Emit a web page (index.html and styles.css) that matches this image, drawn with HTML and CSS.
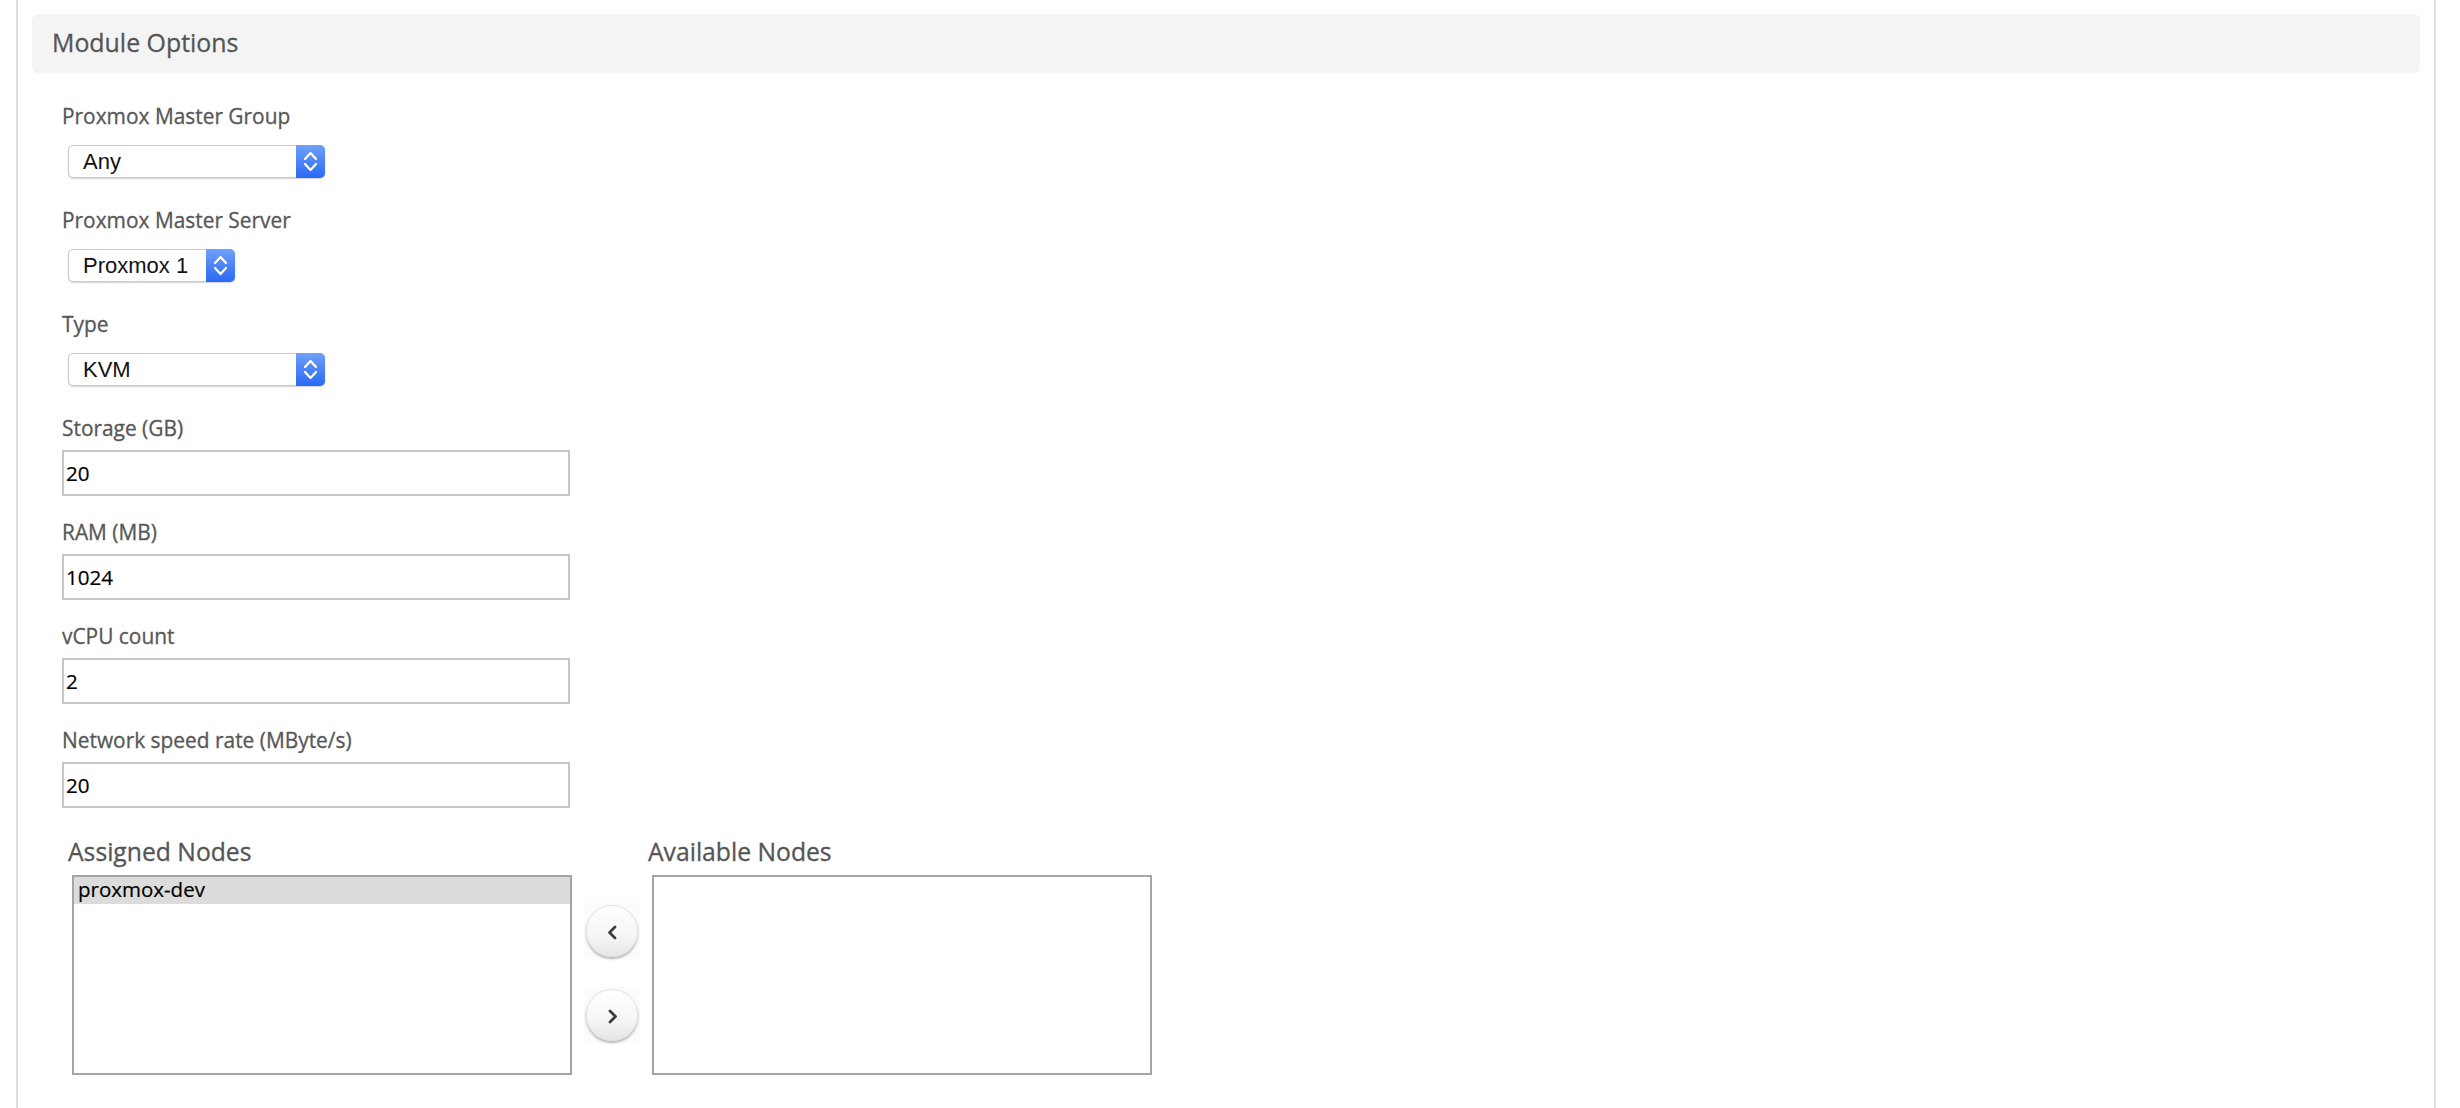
FILE: index.html
```html
<!DOCTYPE html>
<html lang="en">
<head>
<meta charset="utf-8">
<title>Module Options</title>
<link rel="stylesheet" href="styles.css">
</head>
<body>
<div class="frame">
  <div class="panel-head">Module Options</div>
  <div class="form">
    <div class="field">
      <label class="label">Proxmox Master Group</label>
      <div class="control">
        <div class="select select-wide">
          <span class="select-value">Any</span>
          <span class="select-arrow"><svg width="29" height="33" viewBox="0 0 29 33"><polyline points="9,14 14.5,8 20,14" fill="none" stroke="#fff" stroke-width="2.2" stroke-linecap="round" stroke-linejoin="round"/><polyline points="9,19 14.5,25 20,19" fill="none" stroke="#fff" stroke-width="2.2" stroke-linecap="round" stroke-linejoin="round"/></svg></span>
        </div>
      </div>
    </div>
    <div class="field">
      <label class="label">Proxmox Master Server</label>
      <div class="control">
        <div class="select select-narrow">
          <span class="select-value">Proxmox 1</span>
          <span class="select-arrow"><svg width="29" height="33" viewBox="0 0 29 33"><polyline points="9,14 14.5,8 20,14" fill="none" stroke="#fff" stroke-width="2.2" stroke-linecap="round" stroke-linejoin="round"/><polyline points="9,19 14.5,25 20,19" fill="none" stroke="#fff" stroke-width="2.2" stroke-linecap="round" stroke-linejoin="round"/></svg></span>
        </div>
      </div>
    </div>
    <div class="field">
      <label class="label">Type</label>
      <div class="control">
        <div class="select select-wide">
          <span class="select-value">KVM</span>
          <span class="select-arrow"><svg width="29" height="33" viewBox="0 0 29 33"><polyline points="9,14 14.5,8 20,14" fill="none" stroke="#fff" stroke-width="2.2" stroke-linecap="round" stroke-linejoin="round"/><polyline points="9,19 14.5,25 20,19" fill="none" stroke="#fff" stroke-width="2.2" stroke-linecap="round" stroke-linejoin="round"/></svg></span>
        </div>
      </div>
    </div>
    <div class="field">
      <label class="label">Storage (GB)</label>
      <div class="control"><input class="input" type="text" value="20"></div>
    </div>
    <div class="field">
      <label class="label">RAM (MB)</label>
      <div class="control"><input class="input" type="text" value="1024"></div>
    </div>
    <div class="field">
      <label class="label">vCPU count</label>
      <div class="control"><input class="input" type="text" value="2"></div>
    </div>
    <div class="field">
      <label class="label">Network speed rate (MByte/s)</label>
      <div class="control"><input class="input" type="text" value="20"></div>
    </div>

    <div class="nodes">
      <div class="nodes-title title-assigned">Assigned Nodes</div>
      <div class="nodes-title title-available">Available Nodes</div>
      <div class="listbox list-assigned">
        <div class="option selected">proxmox-dev</div>
      </div>
      <div class="movers">
        <div class="mover-wrap">
          <button class="mover" type="button" aria-label="Assign"><svg width="52" height="52" viewBox="0 0 52 52"><polyline points="29,22 23.5,27.5 29,33" fill="none" stroke="#3c3c3c" stroke-width="2.8" stroke-linecap="round" stroke-linejoin="round"/></svg></button>
        </div>
        <div class="mover-wrap">
          <button class="mover" type="button" aria-label="Unassign"><svg width="52" height="52" viewBox="0 0 52 52"><polyline points="24,22 29.5,27.5 24,33" fill="none" stroke="#3c3c3c" stroke-width="2.8" stroke-linecap="round" stroke-linejoin="round"/></svg></button>
        </div>
      </div>
      <div class="listbox list-available"></div>
    </div>
  </div>
</div>
</body>
</html>
```

FILE: styles.css
```css
html, body {
  margin: 0;
  padding: 0;
  background: #ffffff;
}

body {
  font-family: "Open Sans", "Noto Sans", sans-serif;
  height: 1108px;
  overflow: hidden;
}

.frame {
  margin: 0 24px 0 16px;
  border-left: 2px solid #dcdcdc;
  border-right: 2px solid #dcdcdc;
  padding: 14px 14px 0;
  min-height: 1108px;
  box-sizing: border-box;
}

.panel-head {
  height: 59px;
  box-sizing: border-box;
  padding: 0 0 2px 20px;
  line-height: 57px;
  background: #f4f4f4;
  border-radius: 6px;
  font-size: 24.9px;
  color: #555555;
  -webkit-text-stroke: 0.3px #555555;
}

.form {
  padding: 28px 0 0 30px;
}

.field {
  margin-bottom: 21px;
}

.label {
  display: block;
  font-size: 20.9px;
  line-height: 30px;
  color: #575757;
  margin-bottom: 7px;
  -webkit-text-stroke: 0.3px #575757;
}

.control {
  display: flow-root;
  height: 46px;
}

.select {
  margin: 7px 0 0 6px;
  height: 33px;
  box-sizing: border-box;
  display: flex;
  align-items: center;
  background: #ffffff;
  border: 1px solid #cacaca;
  border-radius: 5px;
  box-shadow: 0 1px 1.5px rgba(0, 0, 0, 0.18);
}

.select-wide {
  width: 257px;
}

.select-narrow {
  width: 167px;
}

.select-value {
  flex: 1;
  padding-left: 14px;
  font-family: "Liberation Sans", Arial, sans-serif;
  font-size: 22px;
  color: #111111;
  white-space: nowrap;
}

.select-arrow {
  align-self: stretch;
  width: 29px;
  margin: -1px -1px -1px 0;
  display: flex;
  align-items: center;
  justify-content: center;
  background: linear-gradient(#6fa0fa, #2a69f5);
  border-radius: 0 5px 5px 0;
}

.select-arrow svg {
  display: block;
}

.input {
  display: block;
  width: 508px;
  height: 46px;
  box-sizing: border-box;
  margin: 0;
  border: 2px solid #c6c6c6;
  border-radius: 0;
  padding: 0 2px;
  font-family: "Open Sans", "Noto Sans", sans-serif;
  font-size: 20.6px;
  color: #000000;
  background: #ffffff;
  outline: none;
  -webkit-text-stroke: 0.2px #000000;
}

.nodes {
  display: grid;
  grid-template-columns: 504px 76px 504px;
  padding: 6px 0 0 6px;
}

.nodes-title {
  font-size: 24.7px;
  line-height: 34px;
  color: #555555;
  margin-bottom: 6px;
  grid-row: 1;
  -webkit-text-stroke: 0.3px #555555;
}

.title-assigned {
  grid-column: 1;
}

.title-available {
  grid-column: 3;
}

.listbox {
  grid-row: 2;
  margin-left: 4px;
  width: 500px;
  height: 200px;
  box-sizing: border-box;
  border: 2px solid #a5a5a5;
  background: #ffffff;
}

.list-assigned {
  grid-column: 1;
}

.list-available {
  grid-column: 3;
}

.option {
  height: 27px;
  box-sizing: border-box;
  padding: 0 0 3px 4px;
  line-height: 24px;
  font-size: 20.5px;
  color: #000000;
  -webkit-text-stroke: 0.2px #000000;
}

.option.selected {
  background: #dcdcdc;
}

.movers {
  grid-row: 2;
  grid-column: 2;
  display: flex;
  flex-direction: column;
  align-items: center;
  justify-content: center;
  gap: 28px;
  padding: 0 0 5px 4px;
}

.mover-wrap {
  width: 56px;
  height: 56px;
  background: #fbfbfb;
  display: flex;
  align-items: center;
  justify-content: center;
}

.mover {
  width: 52px;
  height: 52px;
  padding: 0;
  margin: 0;
  border: 1px solid #e2e2e2;
  border-radius: 50%;
  background: linear-gradient(#ffffff 0%, #f6f6f6 60%, #e6e6e6 100%);
  box-shadow: 0 2px 2.5px rgba(0, 0, 0, 0.28);
  display: flex;
  align-items: center;
  justify-content: center;
  cursor: pointer;
}

.mover svg {
  display: block;
  margin: -1px;
}
```
